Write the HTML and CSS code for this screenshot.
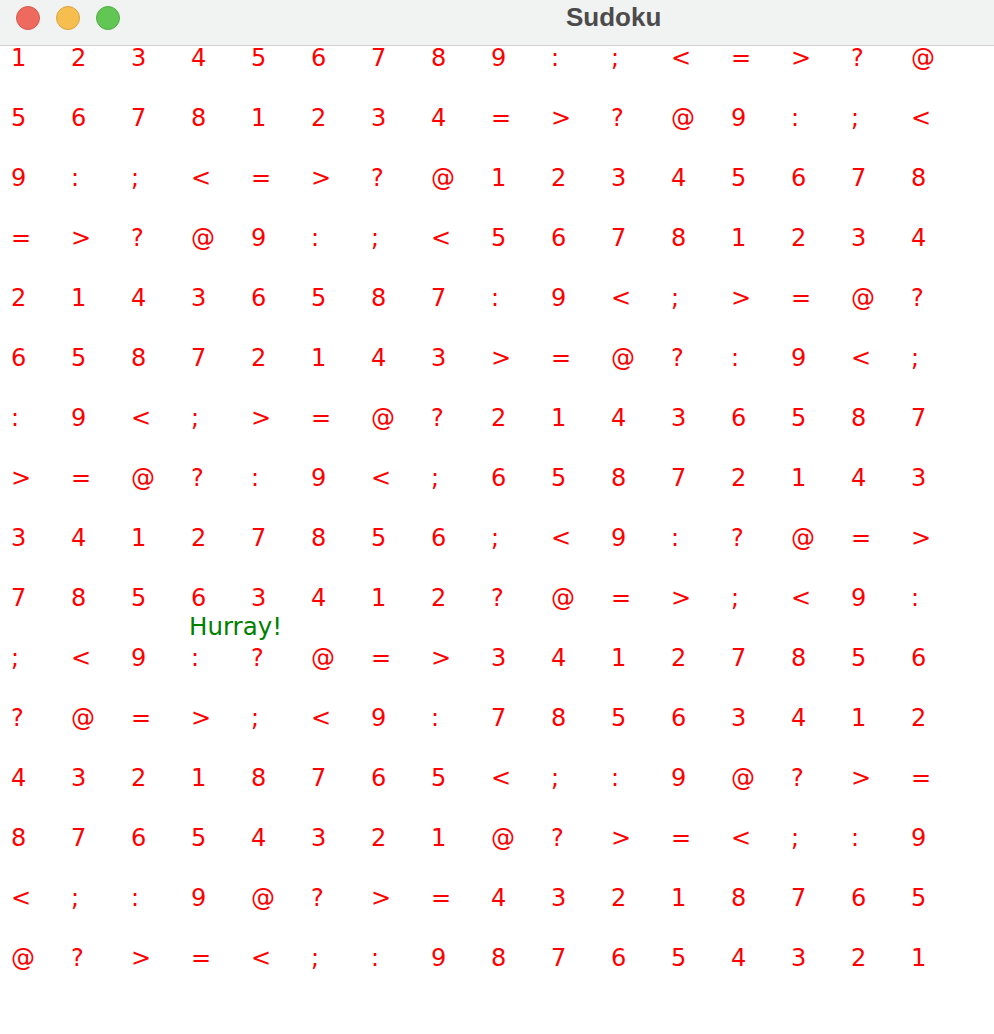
FILE: index.html
```html
<!DOCTYPE html>
<html>
<head>
<meta charset="utf-8">
<title>Sudoku</title>
<link rel="stylesheet" href="styles.css">
</head>
<body>
<div class="window">
  <div class="titlebar">
    <div class="lights">
      <span class="light close"></span>
      <span class="light min"></span>
      <span class="light max"></span>
    </div>
    <div class="title">Sudoku</div>
  </div>
  <div class="board">
    <div class="grid">
      <span>1</span><span>2</span><span>3</span><span>4</span><span>5</span><span>6</span><span>7</span><span>8</span><span>9</span><span>:</span><span>;</span><span>&lt;</span><span>=</span><span>&gt;</span><span>?</span><span>@</span>
      <span>5</span><span>6</span><span>7</span><span>8</span><span>1</span><span>2</span><span>3</span><span>4</span><span>=</span><span>&gt;</span><span>?</span><span>@</span><span>9</span><span>:</span><span>;</span><span>&lt;</span>
      <span>9</span><span>:</span><span>;</span><span>&lt;</span><span>=</span><span>&gt;</span><span>?</span><span>@</span><span>1</span><span>2</span><span>3</span><span>4</span><span>5</span><span>6</span><span>7</span><span>8</span>
      <span>=</span><span>&gt;</span><span>?</span><span>@</span><span>9</span><span>:</span><span>;</span><span>&lt;</span><span>5</span><span>6</span><span>7</span><span>8</span><span>1</span><span>2</span><span>3</span><span>4</span>
      <span>2</span><span>1</span><span>4</span><span>3</span><span>6</span><span>5</span><span>8</span><span>7</span><span>:</span><span>9</span><span>&lt;</span><span>;</span><span>&gt;</span><span>=</span><span>@</span><span>?</span>
      <span>6</span><span>5</span><span>8</span><span>7</span><span>2</span><span>1</span><span>4</span><span>3</span><span>&gt;</span><span>=</span><span>@</span><span>?</span><span>:</span><span>9</span><span>&lt;</span><span>;</span>
      <span>:</span><span>9</span><span>&lt;</span><span>;</span><span>&gt;</span><span>=</span><span>@</span><span>?</span><span>2</span><span>1</span><span>4</span><span>3</span><span>6</span><span>5</span><span>8</span><span>7</span>
      <span>&gt;</span><span>=</span><span>@</span><span>?</span><span>:</span><span>9</span><span>&lt;</span><span>;</span><span>6</span><span>5</span><span>8</span><span>7</span><span>2</span><span>1</span><span>4</span><span>3</span>
      <span>3</span><span>4</span><span>1</span><span>2</span><span>7</span><span>8</span><span>5</span><span>6</span><span>;</span><span>&lt;</span><span>9</span><span>:</span><span>?</span><span>@</span><span>=</span><span>&gt;</span>
      <span>7</span><span>8</span><span>5</span><span>6</span><span>3</span><span>4</span><span>1</span><span>2</span><span>?</span><span>@</span><span>=</span><span>&gt;</span><span>;</span><span>&lt;</span><span>9</span><span>:</span>
      <span>;</span><span>&lt;</span><span>9</span><span>:</span><span>?</span><span>@</span><span>=</span><span>&gt;</span><span>3</span><span>4</span><span>1</span><span>2</span><span>7</span><span>8</span><span>5</span><span>6</span>
      <span>?</span><span>@</span><span>=</span><span>&gt;</span><span>;</span><span>&lt;</span><span>9</span><span>:</span><span>7</span><span>8</span><span>5</span><span>6</span><span>3</span><span>4</span><span>1</span><span>2</span>
      <span>4</span><span>3</span><span>2</span><span>1</span><span>8</span><span>7</span><span>6</span><span>5</span><span>&lt;</span><span>;</span><span>:</span><span>9</span><span>@</span><span>?</span><span>&gt;</span><span>=</span>
      <span>8</span><span>7</span><span>6</span><span>5</span><span>4</span><span>3</span><span>2</span><span>1</span><span>@</span><span>?</span><span>&gt;</span><span>=</span><span>&lt;</span><span>;</span><span>:</span><span>9</span>
      <span>&lt;</span><span>;</span><span>:</span><span>9</span><span>@</span><span>?</span><span>&gt;</span><span>=</span><span>4</span><span>3</span><span>2</span><span>1</span><span>8</span><span>7</span><span>6</span><span>5</span>
      <span>@</span><span>?</span><span>&gt;</span><span>=</span><span>&lt;</span><span>;</span><span>:</span><span>9</span><span>8</span><span>7</span><span>6</span><span>5</span><span>4</span><span>3</span><span>2</span><span>1</span>
    </div>
    <div class="hurray">Hurray!</div>
  </div>
</div>
</body>
</html>
```

FILE: styles.css
```css
html, body {
  margin: 0;
  padding: 0;
  background: #ffffff;
}

.window {
  width: 994px;
  height: 1034px;
  overflow: hidden;
  background: #ffffff;
}

.titlebar {
  box-sizing: border-box;
  background: #f1f2f2;
  border-bottom: 1px solid #d3d3d3;
  height: 46px;
  display: flex;
  align-items: flex-start;
  padding-top: 4px;
}

.lights {
  display: flex;
  gap: 16px;
  margin-left: 16px;
  margin-top: 2px;
}

.light {
  width: 24px;
  height: 24px;
  box-sizing: border-box;
  border-radius: 50%;
  border: 1px solid;
}

.close { background: #ee6a5f; border-color: #d65a4f; }
.min { background: #f5be4f; border-color: #d9a33f; }
.max { background: #62c655; border-color: #52ad45; }

.title {
  margin-left: 446px;
  font-family: "Liberation Sans", Arial, sans-serif;
  font-weight: bold;
  font-size: 26px;
  line-height: 26px;
  color: #4b4b4b;
}

.board {
  position: relative;
  padding-left: 11px;
}

.grid {
  display: grid;
  grid-template-columns: repeat(16, 60px);
  grid-auto-rows: 60px;
  font-family: "DejaVu Sans", Verdana, sans-serif;
  font-size: 24px;
  line-height: 24px;
  color: #ff0000;
}

.hurray {
  position: absolute;
  left: 189px;
  top: 569px;
  font-family: "DejaVu Sans", Verdana, sans-serif;
  font-size: 24.5px;
  line-height: 24px;
  color: #008000;
}
```
